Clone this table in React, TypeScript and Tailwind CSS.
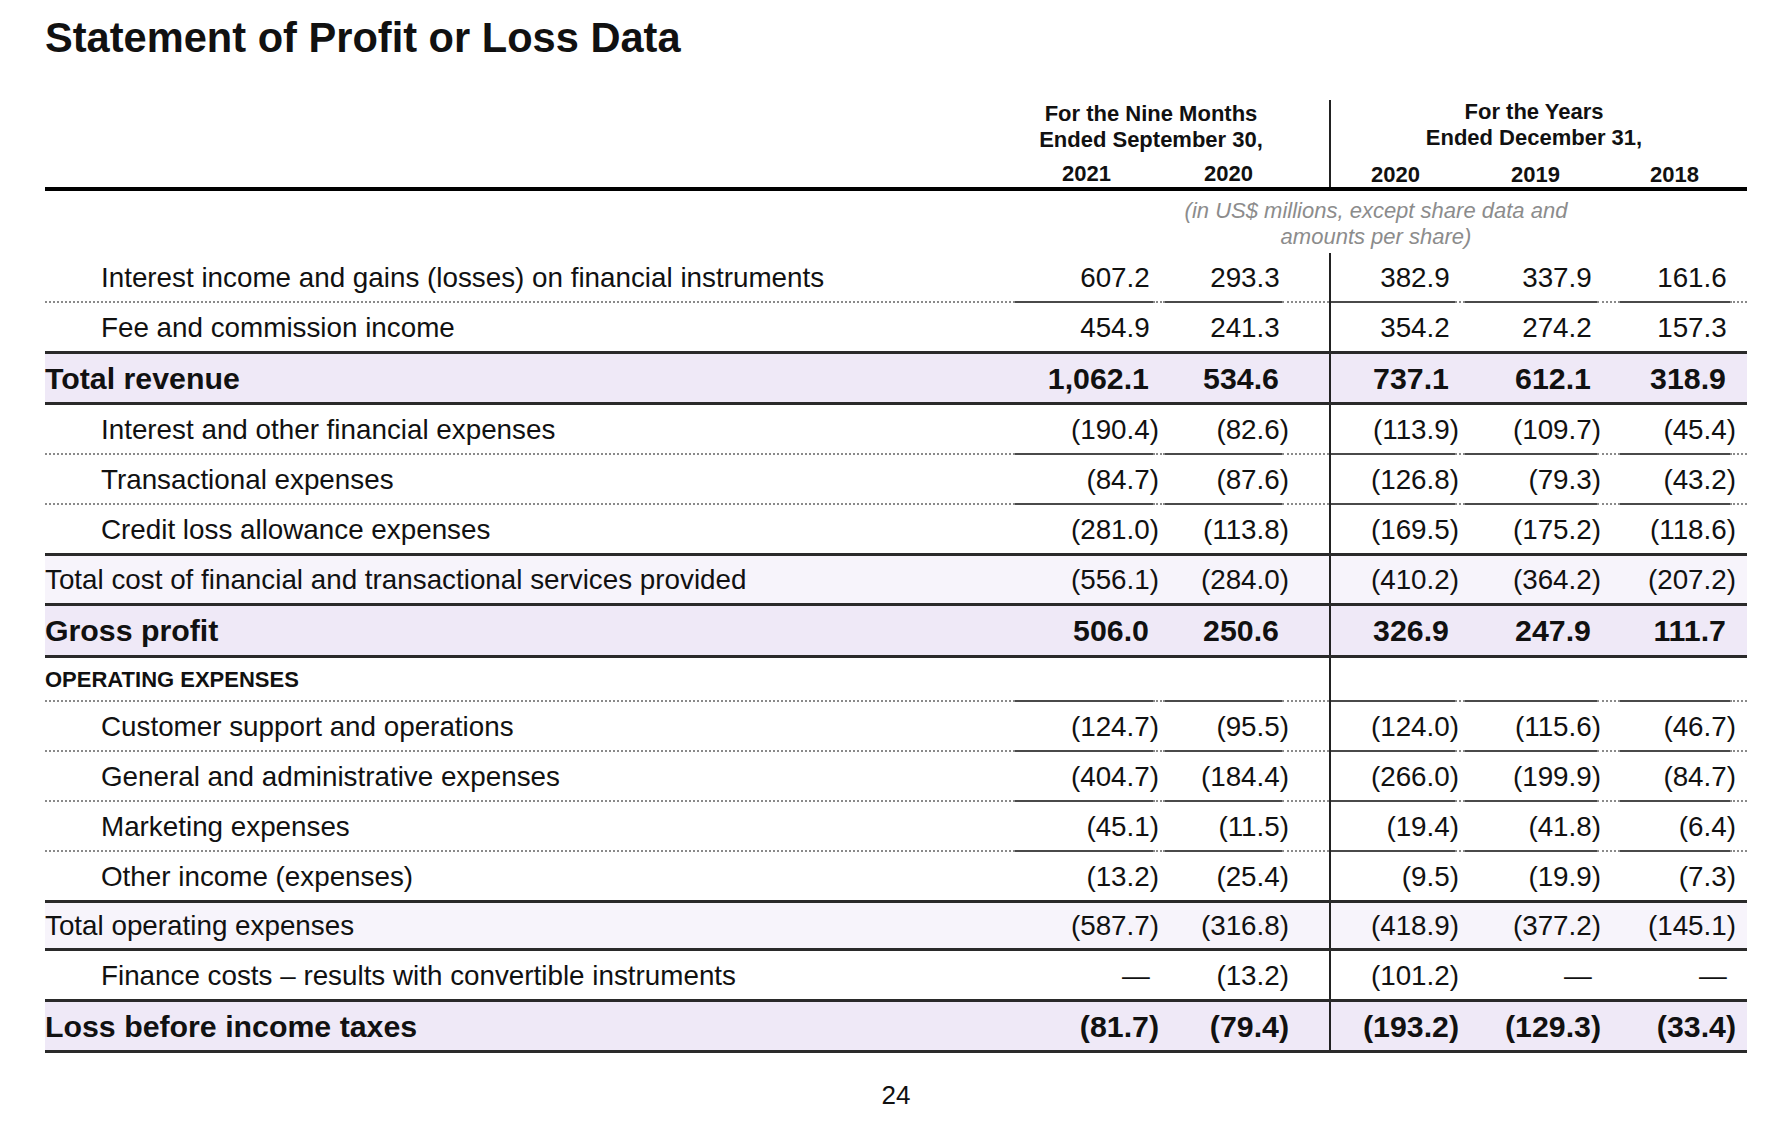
import React from 'react';

type Col = { w: string; pr: string; solid: string; yr: string; divider?: boolean };

const cols: Col[] = [
  { w: 'w-[150px]', pr: 'pr-[6px]', solid: 'w-[138px]', yr: 'pr-[54px]' },
  { w: 'w-[164px]', pr: 'pr-[40px]', solid: 'w-[117px]', yr: 'pr-[76px]' },
  { w: 'w-[136px]', pr: 'pr-[6px]', solid: 'w-[124px]', yr: 'pr-[45px]', divider: true },
  { w: 'w-[155px]', pr: 'pr-[19px]', solid: 'w-[132px]', yr: 'pr-[60px]' },
  { w: 'w-[127px]', pr: 'pr-[11px]', solid: 'w-[110px]', yr: 'pr-[48px]' },
];

const years = ['2021', '2020', '2020', '2019', '2018'];

type Row = {
  label: string;
  kind: 'item' | 'total' | 'sub' | 'section';
  vals: string[];
  line: 'dot' | 'solid';
  h: string;
};

const rows: Row[] = [
  { label: 'Interest income and gains (losses) on financial instruments', kind: 'item', vals: ['607.2', '293.3', '382.9', '337.9', '161.6'], line: 'dot', h: 'h-[48px]' },
  { label: 'Fee and commission income', kind: 'item', vals: ['454.9', '241.3', '354.2', '274.2', '157.3'], line: 'solid', h: 'h-[48px]' },
  { label: 'Total revenue', kind: 'total', vals: ['1,062.1', '534.6', '737.1', '612.1', '318.9'], line: 'solid', h: 'h-[48px]' },
  { label: 'Interest and other financial expenses', kind: 'item', vals: ['(190.4)', '(82.6)', '(113.9)', '(109.7)', '(45.4)'], line: 'dot', h: 'h-[48px]' },
  { label: 'Transactional expenses', kind: 'item', vals: ['(84.7)', '(87.6)', '(126.8)', '(79.3)', '(43.2)'], line: 'dot', h: 'h-[48px]' },
  { label: 'Credit loss allowance expenses', kind: 'item', vals: ['(281.0)', '(113.8)', '(169.5)', '(175.2)', '(118.6)'], line: 'solid', h: 'h-[48px]' },
  { label: 'Total cost of financial and transactional services provided', kind: 'sub', vals: ['(556.1)', '(284.0)', '(410.2)', '(364.2)', '(207.2)'], line: 'solid', h: 'h-[47px]' },
  { label: 'Gross profit', kind: 'total', vals: ['506.0', '250.6', '326.9', '247.9', '111.7'], line: 'solid', h: 'h-[49px]' },
  { label: 'OPERATING EXPENSES', kind: 'section', vals: ['', '', '', '', ''], line: 'dot', h: 'h-[42px]' },
  { label: 'Customer support and operations', kind: 'item', vals: ['(124.7)', '(95.5)', '(124.0)', '(115.6)', '(46.7)'], line: 'dot', h: 'h-[48px]' },
  { label: 'General and administrative expenses', kind: 'item', vals: ['(404.7)', '(184.4)', '(266.0)', '(199.9)', '(84.7)'], line: 'dot', h: 'h-[48px]' },
  { label: 'Marketing expenses', kind: 'item', vals: ['(45.1)', '(11.5)', '(19.4)', '(41.8)', '(6.4)'], line: 'dot', h: 'h-[48px]' },
  { label: 'Other income (expenses)', kind: 'item', vals: ['(13.2)', '(25.4)', '(9.5)', '(19.9)', '(7.3)'], line: 'solid', h: 'h-[48px]' },
  { label: 'Total operating expenses', kind: 'sub', vals: ['(587.7)', '(316.8)', '(418.9)', '(377.2)', '(145.1)'], line: 'solid', h: 'h-[45px]' },
  { label: 'Finance costs – results with convertible instruments', kind: 'item', vals: ['—', '(13.2)', '(101.2)', '—', '—'], line: 'solid', h: 'h-[48px]' },
  { label: 'Loss before income taxes', kind: 'total', vals: ['(81.7)', '(79.4)', '(193.2)', '(129.3)', '(33.4)'], line: 'solid', h: 'h-[48px]' },
];

function Num({ v }: { v: string }) {
  if (!v) return null;
  if (v.startsWith('(')) return <span>{v}</span>;
  return (
    <span>
      {v}
      <span className="invisible">)</span>
    </span>
  );
}

function TableRow({ row }: { row: Row }) {
  const bg = row.kind === 'total' ? 'bg-[#efe9f7]' : row.kind === 'sub' ? 'bg-[#f7f4fb]' : '';
  const labelCls =
    row.kind === 'total'
      ? 'text-[30.3px] font-bold'
      : row.kind === 'section'
        ? 'text-[22px] font-bold'
        : row.kind === 'sub'
          ? 'text-[27.8px]'
          : 'text-[27.8px] pl-[56px]';
  const numCls = row.kind === 'total' ? 'text-[30.3px] font-bold' : 'text-[27.8px]';

  return (
    <div className="flex flex-col">
      <div className={`flex ${row.h} ${bg}`}>
        <div className={`flex-1 flex items-center pt-[2px] whitespace-nowrap ${labelCls}`}>{row.label}</div>
        {cols.map((c, i) => (
          <div
            key={i}
            className={`${c.w} ${c.pr} flex items-center justify-end pt-[2px] whitespace-nowrap ${numCls} ${
              c.divider ? 'border-l-2 border-[#222]' : ''
            }`}
          >
            <Num v={row.vals[i]} />
          </div>
        ))}
      </div>
      {row.line === 'solid' ? (
        <div className="h-[3px] bg-[#2a2a2a]" />
      ) : (
        <div className="flex h-[2px]">
          <div className="flex-1 border-t-2 border-dotted border-[#8a8a8a]" />
          {cols.map((c, i) => (
            <div key={i} className={`${c.w} flex ${c.divider ? 'border-l-2 border-[#222]' : ''}`}>
              <div className={`${c.solid} h-[2px] bg-[#4a4a4a]`} />
              <div className="flex-1 border-t-2 border-dotted border-[#8a8a8a]" />
            </div>
          ))}
        </div>
      )}
    </div>
  );
}

export default function App() {
  return (
    <div
      className="min-h-screen bg-white text-[#111] pl-[45px] pr-[31px]"
      style={{ fontFamily: '"Liberation Sans", Arial, Helvetica, sans-serif' }}
    >
      {/* Title */}
      <h1 className="pt-[17px] text-[41.6px] leading-none font-bold">Statement of Profit or Loss Data</h1>

      {/* Column headers */}
      <div className="mt-[41px] flex flex-col">
        <div className="flex text-[22px] font-bold">
          <div className="flex-1" />
          <div className="w-[314px] flex flex-col">
            <div className="pr-[42px] pt-[1px] text-center leading-[26px]">
              For the Nine Months
              <br />
              Ended September 30,
            </div>
            <div className="flex mt-[9px] leading-[24px]">
              <div className={`${cols[0].w} ${cols[0].yr} text-right`}>{years[0]}</div>
              <div className={`${cols[1].w} ${cols[1].yr} text-right`}>{years[1]}</div>
            </div>
          </div>
          <div className="w-[418px] flex flex-col border-l-2 border-[#222]">
            <div className="pr-[10px] text-center leading-[26px] -mt-[1px]">
              For the Years
              <br />
              Ended December 31,
            </div>
            <div className="flex mt-[12px] leading-[24px] -ml-[2px]">
              <div className={`${cols[2].w} ${cols[2].yr} text-right`}>{years[2]}</div>
              <div className={`${cols[3].w} ${cols[3].yr} text-right`}>{years[3]}</div>
              <div className={`${cols[4].w} ${cols[4].yr} text-right`}>{years[4]}</div>
            </div>
          </div>
        </div>
        <div className="h-[4px] bg-black" />

        {/* Units note */}
        <div className="flex h-[62px]">
          <div className="flex-1" />
          <div className="w-[732px] pr-[10px] pt-[7px] text-center text-[22px] italic leading-[26px] text-[#8c8c8c]">
            (in US$ millions, except share data and
            <br />
            amounts per share)
          </div>
        </div>

        {rows.map((r, i) => (
          <TableRow key={i} row={r} />
        ))}
      </div>

      <div className="mt-[27px] text-center text-[26px] leading-[30px]">24</div>
    </div>
  );
}
